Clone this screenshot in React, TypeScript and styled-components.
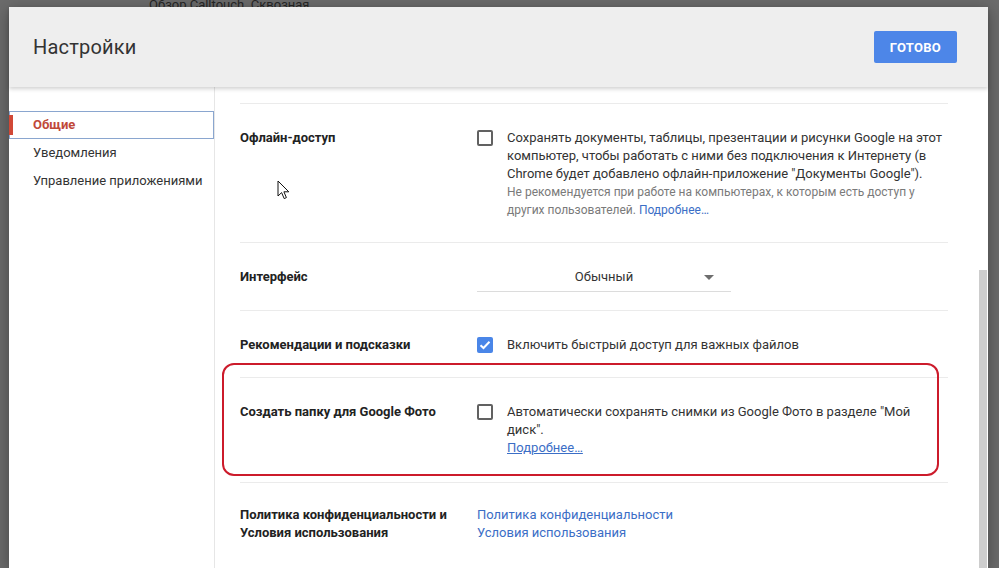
import React from "react";
import styled, { createGlobalStyle } from "styled-components";

const GlobalStyle = createGlobalStyle`
  html, body {
    margin: 0;
    padding: 0;
    background: #6b6b6b;
    overflow: hidden;
  }
  * {
    box-sizing: border-box;
  }
`;

const Page = styled.div`
  width: 999px;
  height: 568px;
  background: #6b6b6b;
  display: flex;
  flex-direction: column;
  overflow: hidden;
  font-family: Roboto, "Noto Sans", Arial, sans-serif;
`;

const BackStrip = styled.div`
  height: 7px;
  overflow: hidden;
  padding-left: 149px;
  color: #262626;
  font-size: 13px;
  line-height: 13px;
`;

const BackText = styled.div`
  margin-top: -2px;
`;

const Stage = styled.div`
  flex: 1;
  display: flex;
  padding-left: 9px;
  min-height: 0;
`;

const Dialog = styled.div`
  width: 979px;
  height: 561px;
  background: #ffffff;
  display: flex;
  flex-direction: column;
  box-shadow: 0 4px 16px rgba(0, 0, 0, 0.35);
`;

const Header = styled.div`
  height: 80px;
  flex: none;
  background: #eeeeee;
  display: flex;
  align-items: center;
  justify-content: space-between;
  padding: 0 31px 0 24px;
  box-shadow: 0 2px 4px rgba(0, 0, 0, 0.18);
  position: relative;
  z-index: 1;
`;

const Title = styled.h1`
  margin: 0;
  font-size: 20px;
  font-weight: 400;
  color: #333333;
  letter-spacing: 0.2px;
`;

const DoneButton = styled.button`
  width: 83px;
  height: 32px;
  border: none;
  border-radius: 2px;
  background: #4d86e8;
  color: #ffffff;
  font-family: Roboto, Arial, sans-serif;
  font-size: 13px;
  font-weight: 700;
  letter-spacing: 0.3px;
`;

const Body = styled.div`
  flex: 1;
  display: flex;
  min-height: 0;
`;

const Sidebar = styled.nav`
  width: 206px;
  flex: none;
  border-right: 1px solid #e6e6e6;
  padding-top: 24px;
  display: flex;
  flex-direction: column;
`;

const NavItem = styled.div<{ $active?: boolean }>`
  height: 28px;
  display: flex;
  align-items: center;
  padding: 0 0 1px 23px;
  font-size: 13px;
  position: relative;
  color: ${(p) => (p.$active ? "#c0483a" : "#333333")};
  font-weight: ${(p) => (p.$active ? 700 : 400)};
  border: 1px solid ${(p) => (p.$active ? "#8aa6cf" : "transparent")};

  &::before {
    content: "";
    display: ${(p) => (p.$active ? "block" : "none")};
    position: absolute;
    left: -1px;
    top: 3px;
    bottom: 3px;
    width: 4px;
    background: #d14836;
  }
`;

const Content = styled.div`
  flex: 1;
  padding: 16px 30px 0 25px;
  overflow: hidden;
`;

const ScrollTrack = styled.div`
  width: 10px;
  flex: none;
  padding: 183px 1px 0 1px;
`;

const ScrollThumb = styled.div`
  width: 8px;
  height: 100%;
  background: #cdcdcd;
`;

const Row = styled.div<{ $top?: number; $bottom?: number }>`
  display: flex;
  border-top: 1px solid #ebebeb;
  padding: ${(p) => p.$top ?? 24}px 0 ${(p) => p.$bottom ?? 24}px;
  position: relative;
  line-height: 18px;
`;

const Label = styled.div`
  width: 237px;
  flex: none;
  font-size: 13px;
  font-weight: 700;
  color: #222222;
`;

const Control = styled.div`
  flex: 1;
  display: flex;
  align-items: flex-start;
  gap: 14px;
`;

const Checkbox = styled.span<{ $checked?: boolean }>`
  width: 16px;
  height: 16px;
  flex: none;
  margin-top: 1px;
  border-radius: 2px;
  border: ${(p) => (p.$checked ? "none" : "2px solid #616161")};
  background: ${(p) => (p.$checked ? "#4a86e8" : "#ffffff")};
  display: flex;
  align-items: center;
  justify-content: center;
`;

const Description = styled.div`
  max-width: 442px;
  font-size: 13px;
  color: #333333;
`;

const Note = styled.div`
  font-size: 12px;
  color: #7a7a7a;
`;

const Link = styled.a<{ $underline?: boolean }>`
  color: #3b6ec6;
  text-decoration: ${(p) => (p.$underline ? "underline" : "none")};
  font-size: inherit;
`;

const Links = styled.div`
  display: flex;
  flex-direction: column;
  font-size: 13px;
`;

const Select = styled.div`
  width: 254px;
  height: 24px;
  border-bottom: 1px solid #dcdcdc;
  display: flex;
  align-items: flex-start;
  justify-content: center;
  position: relative;
  font-size: 13px;
  color: #333333;
`;

const Caret = styled.span`
  position: absolute;
  right: 17px;
  top: 7px;
  width: 0;
  height: 0;
  border-left: 5px solid transparent;
  border-right: 5px solid transparent;
  border-top: 5px solid #6e6e6e;
`;

const Highlight = styled.div`
  position: absolute;
  left: -18px;
  right: 9px;
  top: -15px;
  bottom: 6px;
  border: 2px solid #cc1b2b;
  border-radius: 12px;
  pointer-events: none;
`;

const Pointer = styled.svg`
  position: absolute;
  left: 37px;
  top: 76px;
`;

const Check = () => (
  <svg width="12" height="10" viewBox="0 0 12 10">
    <path d="M1.5 5.2 L4.5 8 L10.5 1.8" fill="none" stroke="#ffffff" strokeWidth="2" />
  </svg>
);

export default function App() {
  return (
    <>
      <GlobalStyle />
      <Page>
        <BackStrip>
          <BackText>Обзор Calltouch. Сквозная</BackText>
        </BackStrip>
        <Stage>
          <Dialog>
            <Header>
              <Title>Настройки</Title>
              <DoneButton>ГОТОВО</DoneButton>
            </Header>
            <Body>
              <Sidebar>
                <NavItem $active>Общие</NavItem>
                <NavItem>Уведомления</NavItem>
                <NavItem>Управление приложениями</NavItem>
              </Sidebar>
              <Content>
                <Row $top={25} $bottom={23}>
                  <Label>Офлайн-доступ</Label>
                  <Control>
                    <Checkbox />
                    <Description>
                      Сохранять документы, таблицы, презентации и рисунки Google на этот
                      компьютер, чтобы работать с ними без подключения к Интернету (в
                      Chrome будет добавлено офлайн-приложение "Документы Google").
                      <Note>
                        Не рекомендуется при работе на компьютерах, к которым есть доступ у
                        других пользователей. <Link>Подробнее…</Link>
                      </Note>
                    </Description>
                  </Control>
                  <Pointer width="13" height="20" viewBox="0 0 13 20">
                    <path
                      d="M1 1 L1 16 L4.6 12.6 L7.2 18.6 L9.4 17.6 L6.9 11.8 L11.8 11.8 Z"
                      fill="#ffffff"
                      stroke="#111111"
                      strokeWidth="1"
                      strokeLinejoin="round"
                    />
                  </Pointer>
                </Row>
                <Row $top={25} $bottom={18}>
                  <Label>Интерфейс</Label>
                  <Control>
                    <Select>
                      Обычный
                      <Caret />
                    </Select>
                  </Control>
                </Row>
                <Row $top={25} $bottom={23}>
                  <Label>Рекомендации и подсказки</Label>
                  <Control>
                    <Checkbox $checked>
                      <Check />
                    </Checkbox>
                    <Description>Включить быстрый доступ для важных файлов</Description>
                  </Control>
                </Row>
                <Row $top={25} $bottom={25}>
                  <Label>Создать папку для Google Фото</Label>
                  <Control>
                    <Checkbox />
                    <Description>
                      Автоматически сохранять снимки из Google Фото в разделе "Мой диск".
                      <div>
                        <Link $underline>Подробнее…</Link>
                      </div>
                    </Description>
                  </Control>
                  <Highlight />
                </Row>
                <Row $top={23}>
                  <Label>
                    Политика конфиденциальности и
                    <br />
                    Условия использования
                  </Label>
                  <Links>
                    <Link>Политика конфиденциальности</Link>
                    <Link>Условия использования</Link>
                  </Links>
                </Row>
              </Content>
              <ScrollTrack>
                <ScrollThumb />
              </ScrollTrack>
            </Body>
          </Dialog>
        </Stage>
      </Page>
    </>
  );
}
